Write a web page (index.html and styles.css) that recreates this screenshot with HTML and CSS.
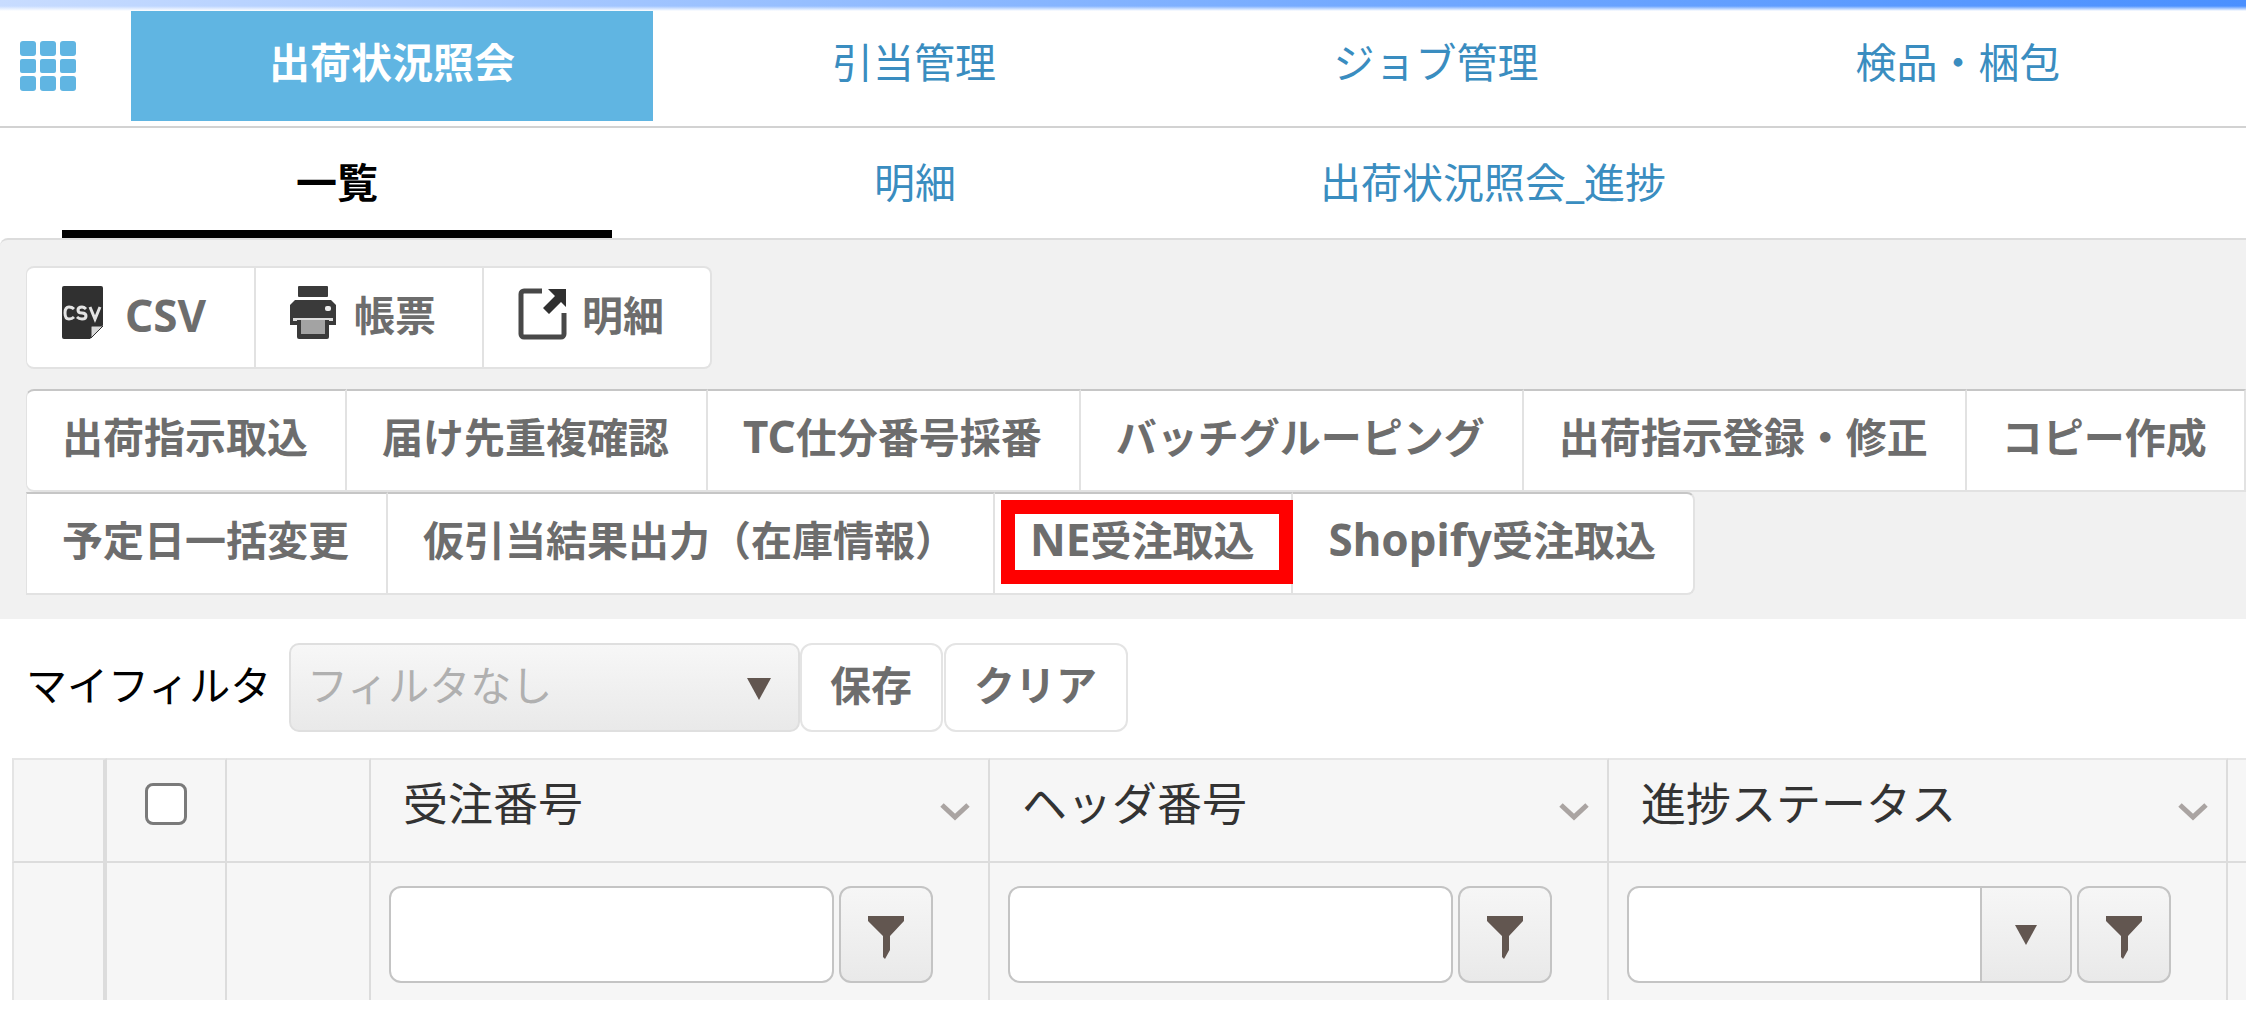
FILE: index.html
```html
<!DOCTYPE html>
<html lang="ja">
<head>
<meta charset="utf-8">
<title>出荷状況照会</title>
<link rel="stylesheet" href="styles.css">
</head>
<body>
<header class="header">
  <button class="menu-button" type="button" aria-label="メニュー">
    <svg class="menu-icon" viewBox="0 0 56 50" aria-hidden="true">
      <g fill="#60b5e2">
        <rect x="0" y="0" width="16" height="15" rx="3"/><rect x="20" y="0" width="16" height="15" rx="3"/><rect x="40" y="0" width="16" height="15" rx="3"/>
        <rect x="0" y="18" width="16" height="14" rx="2"/><rect x="20" y="18" width="16" height="14" rx="2"/><rect x="40" y="18" width="16" height="14" rx="2"/>
        <rect x="0" y="35" width="16" height="15" rx="3"/><rect x="20" y="35" width="16" height="15" rx="3"/><rect x="40" y="35" width="16" height="15" rx="3"/>
      </g>
    </svg>
  </button>
  <nav class="main-nav">
    <a class="main-tab main-tab-active" href="#status">出荷状況照会</a>
    <a class="main-tab" href="#allocation">引当管理</a>
    <a class="main-tab" href="#jobs">ジョブ管理</a>
    <a class="main-tab" href="#packing">検品・梱包</a>
  </nav>
</header>
<nav class="sub-nav">
  <a class="sub-tab sub-tab-active" href="#list">一覧</a>
  <a class="sub-tab" href="#detail">明細</a>
  <a class="sub-tab" href="#progress">出荷状況照会_進捗</a>
</nav>
<section class="toolbar">
  <div class="button-group export-group">
    <button class="tool-button icon-button" type="button">
      <svg class="tool-icon" viewBox="0 0 50 54" aria-hidden="true">
        <path d="M3 0H40a2 2 0 0 1 2 2V39L29 53H3a2 2 0 0 1-2-2V2a2 2 0 0 1 2-2z" fill="#303030"/>
        <path d="M30 52V41q0-1 1-1H42z" fill="#d8d8d8" stroke="#303030" stroke-width="1"/>
        <path d="M13 23q-2-2-5-2-4 0-4 6t4 6q3 0 5-2M25 23q-2-2-4-2-4 0-4 3t4 3q4 0 4 3t-4 3q-3 0-5-2M29 21l5 12 5-12" fill="none" stroke="#e4e4e4" stroke-width="3"/>
      </svg>
      <span class="latin">CSV</span>
    </button>
    <button class="tool-button icon-button" type="button">
      <svg class="tool-icon" viewBox="0 0 50 54" aria-hidden="true">
        <rect x="8" y="0" width="30" height="11" rx="1" fill="#3a3a3a"/>
        <path d="M5 14H41l5 5V39H0V19z" fill="#3a3a3a"/>
        <rect x="35" y="20" width="6" height="5" rx="2" fill="#eee"/>
        <path d="M3 32H43V35H3z" fill="#ddd"/>
        <path d="M7 34H39V51a2 2 0 0 1-2 2H9a2 2 0 0 1-2-2z" fill="#3a3a3a"/>
        <path d="M11 34H35V48H11z" fill="#a3a3a3"/>
      </svg>
      <span>帳票</span>
    </button>
    <button class="tool-button icon-button" type="button">
      <svg class="tool-icon" viewBox="0 0 50 54" aria-hidden="true">
        <path d="M24 5H6a3 3 0 0 0-3 3V48a3 3 0 0 0 3 3H43a3 3 0 0 0 3-3V27" fill="none" stroke="#484848" stroke-width="5"/>
        <path d="M30 3H48V21L43 16 31 28 25 22 37 10z" fill="#303030"/>
      </svg>
      <span>明細</span>
    </button>
  </div>
  <div class="action-group">
    <div class="button-group action-row">
      <button class="tool-button" type="button">出荷指示取込</button>
      <button class="tool-button" type="button">届け先重複確認</button>
      <button class="tool-button" type="button"><span class="latin">TC</span>仕分番号採番</button>
      <button class="tool-button" type="button">バッチグルーピング</button>
      <button class="tool-button" type="button">出荷指示登録・修正</button>
      <button class="tool-button" type="button">コピー作成</button>
    </div>
    <div class="button-group action-row action-row-last">
      <button class="tool-button" type="button">予定日一括変更</button>
      <button class="tool-button" type="button">仮引当結果出力（在庫情報）</button>
      <button class="tool-button highlighted" type="button"><span class="latin">NE</span>受注取込</button>
      <button class="tool-button" type="button"><span class="latin">Shopify</span>受注取込</button>
    </div>
  </div>
</section>
<section class="my-filter">
  <label class="my-filter-label" for="my-filter">マイフィルタ</label>
  <div class="select-box my-filter-box">
    <select class="my-filter-select" id="my-filter"><option>フィルタなし</option></select>
    <svg class="select-arrow" viewBox="0 0 24 22" aria-hidden="true"><path d="M0 0H24L12 22z" fill="#625650"/></svg>
  </div>
  <button class="plain-button save-button" type="button">保存</button>
  <button class="plain-button" type="button">クリア</button>
</section>
<main class="grid-area">
  <table class="grid">
    <colgroup>
      <col class="col-handle"><col class="col-check"><col class="col-blank">
      <col class="col-data"><col class="col-data"><col class="col-data"><col>
    </colgroup>
    <thead>
      <tr class="title-row">
        <th class="cell-handle"></th>
        <th class="cell-check"><input class="check" type="checkbox" aria-label="すべて選択"></th>
        <th></th>
        <th><div class="title"><span>受注番号</span><svg class="chevron" viewBox="0 0 30 18" aria-hidden="true"><path d="M2 2L15 14 28 2" fill="none" stroke="#aaa4a2" stroke-width="5"/></svg></div></th>
        <th><div class="title"><span>ヘッダ番号</span><svg class="chevron" viewBox="0 0 30 18" aria-hidden="true"><path d="M2 2L15 14 28 2" fill="none" stroke="#aaa4a2" stroke-width="5"/></svg></div></th>
        <th><div class="title"><span>進捗ステータス</span><svg class="chevron" viewBox="0 0 30 18" aria-hidden="true"><path d="M2 2L15 14 28 2" fill="none" stroke="#aaa4a2" stroke-width="5"/></svg></div></th>
        <th class="cell-last"></th>
      </tr>
      <tr class="filter-row">
        <td class="cell-handle"></td>
        <td></td>
        <td></td>
        <td><div class="filter"><input class="filter-input" type="text" aria-label="受注番号"><button class="filter-button" type="button" aria-label="絞り込み"><svg class="funnel" viewBox="0 0 36 44" aria-hidden="true"><path d="M0 0H36V5L22 20V34L17 43 15 41V20L0 5z" fill="#625650"/></svg></button></div></td>
        <td><div class="filter"><input class="filter-input" type="text" aria-label="ヘッダ番号"><button class="filter-button" type="button" aria-label="絞り込み"><svg class="funnel" viewBox="0 0 36 44" aria-hidden="true"><path d="M0 0H36V5L22 20V34L17 43 15 41V20L0 5z" fill="#625650"/></svg></button></div></td>
        <td><div class="filter"><div class="select-box status-box"><select class="status-select" aria-label="進捗ステータス"><option></option></select><span class="status-arrow"><svg class="small-arrow" viewBox="0 0 22 20" aria-hidden="true"><path d="M0 0H22L11 20z" fill="#625650"/></svg></span></div><button class="filter-button" type="button" aria-label="絞り込み"><svg class="funnel" viewBox="0 0 36 44" aria-hidden="true"><path d="M0 0H36V5L22 20V34L17 43 15 41V20L0 5z" fill="#625650"/></svg></button></div></td>
        <td class="cell-last"></td>
      </tr>
    </thead>
  </table>
</main>
</body>
</html>
```
FILE: styles.css
```css
* {
  box-sizing: border-box;
}

body {
  margin: 0;
  background: #fff;
  color: #000;
  font-family: "Noto Sans", "Noto Sans CJK JP", sans-serif;
  font-size: 41px;
  line-height: 48px;
  overflow-x: hidden;
}

button,
input,
select {
  margin: 0;
  font: inherit;
}

a {
  color: #3a8dc0;
  text-decoration: none;
}

.latin {
  font-size: 44px;
}

/* Header */
.header {
  display: flex;
  align-items: flex-start;
  height: 128px;
  padding-top: 11px;
  border-bottom: 2px solid #d2d2d2;
  background: linear-gradient(to bottom, transparent 6px, #fff 11px),
    linear-gradient(to right, #c8dcff, #74aaff 60%, #4a90ff);
}

.menu-button {
  flex: none;
  width: 131px;
  height: 110px;
  padding: 0 0 0 20px;
  border: 0;
  background: #fff;
}

.menu-icon {
  display: block;
  width: 56px;
  height: 50px;
}

.main-nav {
  display: flex;
  flex: 1;
  height: 115px;
  padding-right: 27px;
  background: #fff;
}

.main-tab {
  display: flex;
  flex: 1;
  align-items: center;
  justify-content: center;
  height: 110px;
  padding-bottom: 8px;
}

.main-tab-active {
  background: #60b5e2;
  color: #fff;
  font-weight: 700;
}

.sub-nav {
  display: grid;
  grid-template-columns: repeat(3, 550px);
  gap: 28px;
  height: 110px;
  padding-left: 62px;
}

.sub-tab {
  display: flex;
  align-items: center;
  justify-content: center;
  padding-top: 6px;
  border-bottom: 8px solid transparent;
}

.sub-tab-active {
  border-bottom-color: #000;
  color: #000;
  font-weight: 700;
}

/* Toolbar */
.toolbar {
  padding: 26px 0 24px 26px;
  border-top: 2px solid #dcdcdc;
  border-top-left-radius: 8px;
  background: #f1f1f1;
}

.button-group {
  display: flex;
}

.tool-button {
  position: relative;
  flex: none;
  height: 103px;
  padding: 0 37px 8px 35px;
  border: 1px solid #e2e2e2;
  border-width: 2px 2px 2px 0;
  background: #fff;
  color: #6d6d6d;
  font-weight: 700;
  white-space: nowrap;
}

.tool-button:first-child {
  border-left-width: 1px;
}

.icon-button {
  display: flex;
  align-items: center;
  gap: 14px;
  padding: 0 46px 6px 34px;
}

.tool-icon {
  width: 50px;
  height: 54px;
  margin-bottom: 4px;
}

.export-group {
  margin-bottom: 20px;
}

.export-group .tool-button:first-child {
  padding-right: 48px;
  border-radius: 8px 0 0 8px;
}

.export-group .tool-button:last-child {
  border-radius: 0 8px 8px 0;
}

.action-row .tool-button {
  border-top-color: #c6c6c6;
}

.action-row:first-child .tool-button:first-child {
  border-radius: 8px 0 0 8px;
}

.action-row-last .tool-button:last-child {
  border-radius: 0 8px 8px 0;
}

.highlighted::after {
  content: "";
  position: absolute;
  z-index: 1;
  inset: 6px -2px 9px 6px;
  border: 14px solid #f00;
}

/* Saved filter */
.my-filter {
  display: flex;
  align-items: center;
  padding: 24px 26px 26px;
}

.my-filter-label {
  width: 263px;
  padding-bottom: 6px;
}

.select-box {
  position: relative;
}

.my-filter-box {
  width: 511px;
}

.my-filter-select {
  display: block;
  appearance: none;
  width: 100%;
  height: 89px;
  padding: 0 60px 6px 16px;
  border: 2px solid #dfdfdf;
  border-radius: 10px;
  background: linear-gradient(#f7f7f7, #e9e9e9);
  color: #b0b0b0;
}

.select-arrow {
  position: absolute;
  top: 35px;
  right: 29px;
  width: 24px;
  height: 22px;
  pointer-events: none;
}

.plain-button {
  height: 89px;
  padding: 0 29px 6px 28px;
  border: 2px solid #e4e4e4;
  border-radius: 12px;
  background: #fff;
  color: #6d6d6d;
  font-weight: 700;
}

.save-button {
  margin-right: 1px;
}

/* Data grid */
.grid-area {
  padding-left: 12px;
}

.grid {
  width: 100%;
  border-collapse: separate;
  border-spacing: 0;
  table-layout: fixed;
  background: #f6f6f6;
  color: #333;
  font-size: 45px;
}

.col-handle {
  width: 95px;
}

.col-check {
  width: 120px;
}

.col-blank {
  width: 144px;
}

.col-data {
  width: 619px;
}

.grid th,
.grid td {
  padding: 0;
  border-right: 2px solid #dcdcdc;
  font-weight: 400;
  text-align: left;
}

.grid .cell-handle {
  border-left: 2px solid #e4e4e4;
  border-right-width: 4px;
}

.grid .cell-last {
  border-right: 0;
}

.title-row th {
  height: 105px;
  border-top: 2px solid #e6e6e6;
  border-bottom: 2px solid #dcdcdc;
}

.grid .cell-check {
  text-align: center;
}

.check {
  appearance: none;
  display: block;
  width: 42px;
  height: 42px;
  margin: 0 auto 14px 38px;
  border: 3px solid #7a7a7a;
  border-radius: 8px;
  background: #fff;
}

.title {
  display: flex;
  align-items: center;
  justify-content: space-between;
  padding: 0 18px 14px 32px;
}

.chevron {
  width: 30px;
  height: 18px;
  margin-top: 16px;
}

.filter-row td {
  height: 137px;
}

.filter {
  display: flex;
  gap: 5px;
  padding: 6px 55px 0 18px;
}

.filter-input,
.status-box {
  flex: 1;
  min-width: 0;
  height: 97px;
}

.filter-input,
.status-select {
  padding: 0 16px;
  border: 2px solid #c4c4c4;
  border-radius: 12px;
  background: #fff;
}

.status-select {
  display: block;
  appearance: none;
  width: 100%;
  height: 97px;
}

.status-arrow {
  position: absolute;
  top: 2px;
  right: 2px;
  bottom: 2px;
  display: flex;
  align-items: center;
  justify-content: center;
  width: 90px;
  border-left: 2px solid #c4c4c4;
  border-radius: 0 10px 10px 0;
  background: linear-gradient(#f6f6f6, #e9e9e9);
  pointer-events: none;
}

.small-arrow {
  width: 22px;
  height: 20px;
}

.filter-button {
  display: flex;
  flex: none;
  align-items: center;
  justify-content: center;
  width: 94px;
  height: 97px;
  padding: 6px 0 0;
  border: 2px solid #c4c4c4;
  border-radius: 12px;
  background: linear-gradient(#f6f6f6, #e9e9e9);
}

.funnel {
  width: 36px;
  height: 44px;
}
```
